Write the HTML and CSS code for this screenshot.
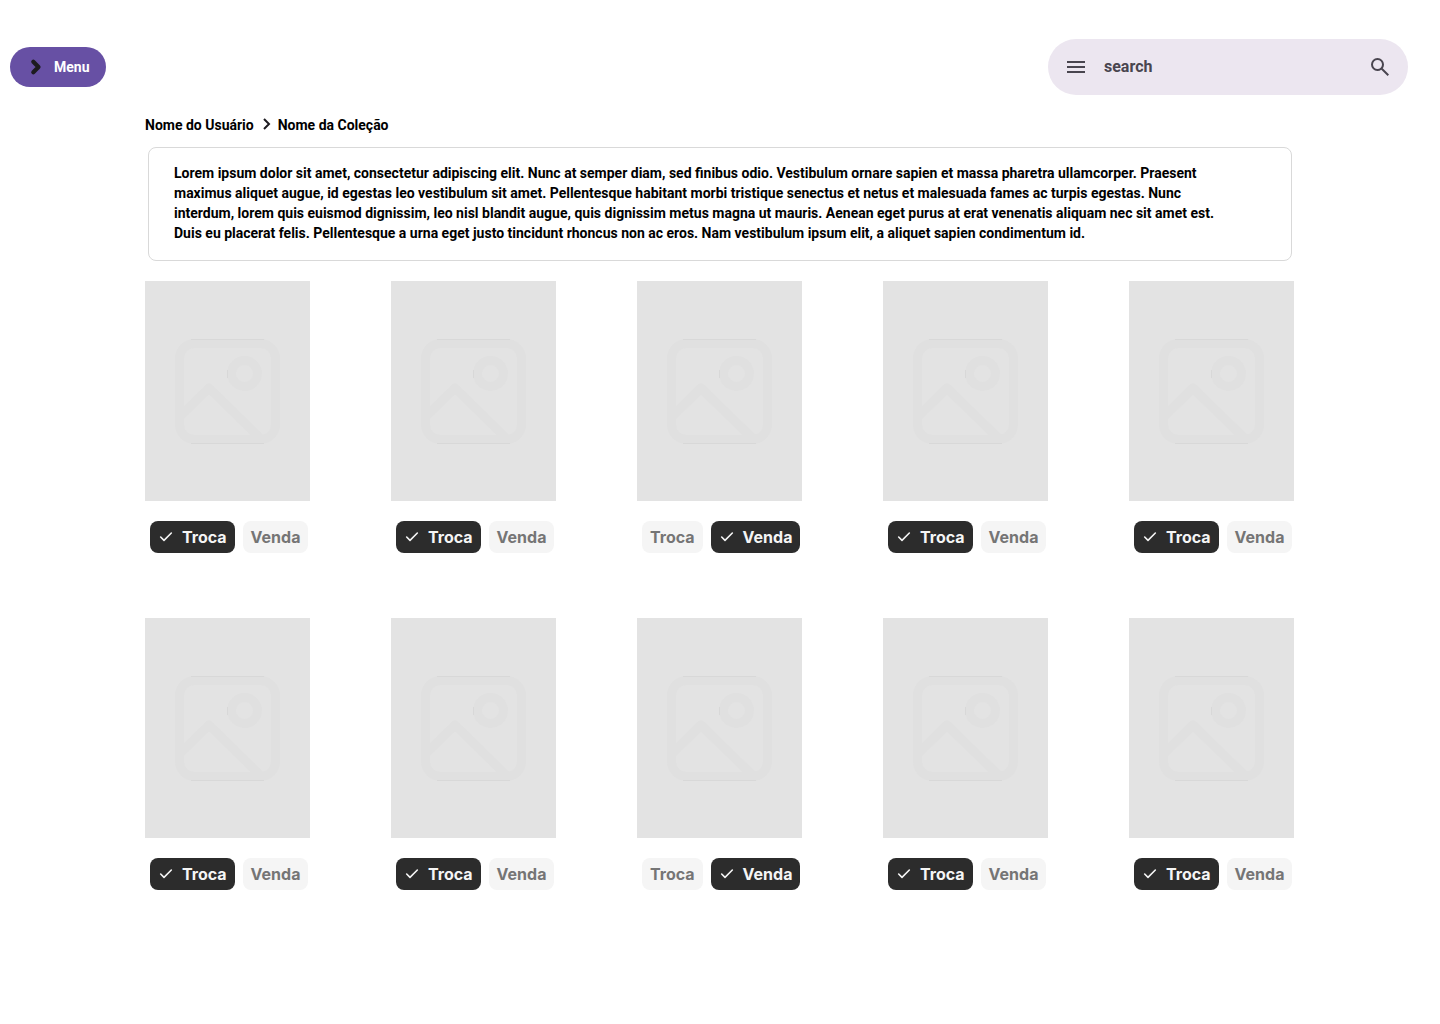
FILE: index.html
```html
<!DOCTYPE html>
<html lang="pt-BR">
<head>
<meta charset="utf-8">
<meta name="viewport" content="width=device-width, initial-scale=1">
<title>Nome da Coleção</title>
<link rel="stylesheet" href="styles.css">
</head>
<body>
<svg class="sprite" aria-hidden="true">
  <symbol id="check" viewBox="0 0 16 16"><path d="M13.33 4 6 11.33 2.67 8" fill="none" stroke="currentColor" stroke-width="1.6" stroke-linecap="round" stroke-linejoin="round"/></symbol>
  <symbol id="picture" viewBox="0 0 105 105">
    <g fill="none" stroke="currentColor" stroke-width="9" stroke-linejoin="round">
      <rect x="4.500" y="4.500" width="96" height="96" rx="15"/>
      <circle cx="69.500" cy="34.500" r="13"/>
      <path d="M4.500 78 34 49 86 100"/>
    </g>
    <path d="M16 .5h73M16 104.500h73M52.500 31v8" stroke="#d8d8d8" stroke-width="1"/>
  </symbol>
</svg>
<header class="topbar">
  <button class="menu-button" type="button">
    <svg class="menu-icon" viewBox="0 0 20 20" aria-hidden="true"><path d="m7.300 4.700 5.200 5.300-5.200 5.300" fill="none" stroke="currentColor" stroke-width="4.200" stroke-linecap="round" stroke-linejoin="round"/></svg>
    Menu
  </button>
  <form class="search" role="search">
    <button class="icon-button" type="button" aria-label="Menu de busca">
      <svg viewBox="0 0 24 24" aria-hidden="true"><path d="M3 18v-2h18v2zm0-5v-2h18v2zm0-5V6h18v2z" fill="currentColor"/></svg>
    </button>
    <input class="search-input" type="text" placeholder="search" aria-label="search">
    <button class="icon-button" type="submit" aria-label="Buscar">
      <svg viewBox="0 0 24 24" aria-hidden="true"><path d="m19.6 21-6.3-6.3A6.1 6.1 0 0 1 9.500 16a6.270 6.270 0 0 1-4.612-1.887Q3 12.225 3 9.500t1.888-4.612T9.500 3t4.613 1.888T16 9.500a6.100 6.100 0 0 1-1.300 3.800l6.300 6.300zM9.500 14q1.875 0 3.188-1.312T14 9.500t-1.312-3.187T9.500 5 6.313 6.313 5 9.500t1.313 3.188T9.500 14" fill="currentColor"/></svg>
    </button>
  </form>
</header>
<main class="collection">
  <nav class="breadcrumb" aria-label="Navegação">
    <a href="#usuario">Nome do Usuário</a>
    <svg class="breadcrumb-icon" viewBox="0 0 16 16" aria-hidden="true"><path d="m6 2 5 5-5 5" fill="none" stroke="currentColor" stroke-width="2"/></svg>
    <a href="#colecao">Nome da Coleção</a>
  </nav>
  <p class="description">Lorem ipsum dolor sit amet, consectetur adipiscing elit. Nunc at semper diam, sed finibus odio. Vestibulum ornare sapien et massa pharetra ullamcorper. Praesent maximus aliquet augue, id egestas leo vestibulum sit amet. Pellentesque habitant morbi tristique senectus et netus et malesuada fames ac turpis egestas. Nunc interdum, lorem quis euismod dignissim, leo nisl blandit augue, quis dignissim metus magna ut mauris. Aenean eget purus at erat venenatis aliquam nec sit amet est. Duis eu placerat felis. Pellentesque a urna eget justo tincidunt rhoncus non ac eros. Nam vestibulum ipsum elit, a aliquet sapien condimentum id.</p>
  <ul class="items" id="items"></ul>
</main>
<script src="items.js"></script>
</body>
</html>
```
FILE: items.js
```js
const items = ["Troca", "Troca", "Venda", "Troca", "Troca", "Troca", "Troca", "Venda", "Troca", "Troca"];

const chip = (label, selected) => `
  <button class="chip" type="button" aria-pressed="${label === selected}">
    <svg class="chip-icon" aria-hidden="true"><use href="#check"/></svg>${label}
  </button>`;

const list = document.getElementById("items");
list.innerHTML = items.map((selected) => `
  <li class="item">
    <div class="cover"><svg class="cover-icon" aria-hidden="true"><use href="#picture"/></svg></div>
    <div class="chips">${chip("Troca", selected)}${chip("Venda", selected)}</div>
  </li>`).join("");

list.addEventListener("click", (event) => {
  const clicked = event.target.closest(".chip");
  if (!clicked) return;
  for (const other of clicked.parentElement.children) {
    other.setAttribute("aria-pressed", other === clicked);
  }
});
```
FILE: styles.css
```css
* { box-sizing: border-box; }

body {
  margin: 0;
  background: #fff;
  color: #000;
  font: 700 14px/20px Roboto, sans-serif;
}

button { border: 0; cursor: pointer; }

.sprite { display: none; }

.topbar {
  display: flex;
  align-items: center;
  justify-content: space-between;
  padding: 39px 32px 0 10px;
}

.menu-button {
  display: flex;
  align-items: center;
  gap: 8px;
  height: 40px;
  padding: 0 16px;
  border-radius: 20px;
  background: #6750a4;
  color: #fff;
  font: inherit;
}

.menu-icon { width: 20px; height: 20px; color: #1d1b20; }

.search {
  display: flex;
  align-items: center;
  width: 360px;
  height: 56px;
  padding: 0 4px;
  border-radius: 28px;
  background: #ece6f0;
  color: #49454f;
}

.icon-button {
  display: grid;
  place-items: center;
  width: 48px;
  height: 48px;
  padding: 0;
  background: none;
  color: inherit;
}

.icon-button svg { width: 24px; height: 24px; }

.search-input {
  flex: 1;
  min-width: 0;
  padding: 0 4px;
  border: 0;
  outline: 0;
  background: none;
  color: inherit;
  font: 700 16px/24px Roboto, sans-serif;
}

.search-input::placeholder { color: inherit; opacity: 1; }

.collection { padding: 20px 146px 40px 145px; }

.breadcrumb { display: flex; align-items: center; gap: 4px; }
.breadcrumb a { color: inherit; text-decoration: none; }
.breadcrumb-icon { width: 16px; height: 16px; color: #1d1b20; }

.description {
  margin: 12px 2px 20px 3px;
  padding: 15px 56px 17px 25px;
  border: 1px solid #d9d9d9;
  border-radius: 8px;
}

.items {
  display: grid;
  grid-template-columns: repeat(5, 165px);
  justify-content: space-between;
  row-gap: 65px;
  margin: 0;
  padding: 0;
  list-style: none;
}

.cover {
  display: grid;
  place-items: center;
  height: 220px;
  background: #e3e3e3;
}

.cover-icon { width: 105px; height: 105px; color: #e0e0e0; }

.chips {
  display: flex;
  gap: 8px;
  padding: 20px 0 0 5px;
}

.chip {
  display: flex;
  align-items: center;
  gap: 8px;
  height: 32px;
  padding: 0 8px;
  border-radius: 8px;
  background: #f5f5f5;
  color: #757575;
  font: 700 16px/16px Inter, sans-serif;
}

.chip-icon { display: none; width: 16px; height: 16px; }

.chip[aria-pressed="true"] { background: #2c2c2c; color: #f5f5f5; }
.chip[aria-pressed="true"] .chip-icon { display: block; }
```
